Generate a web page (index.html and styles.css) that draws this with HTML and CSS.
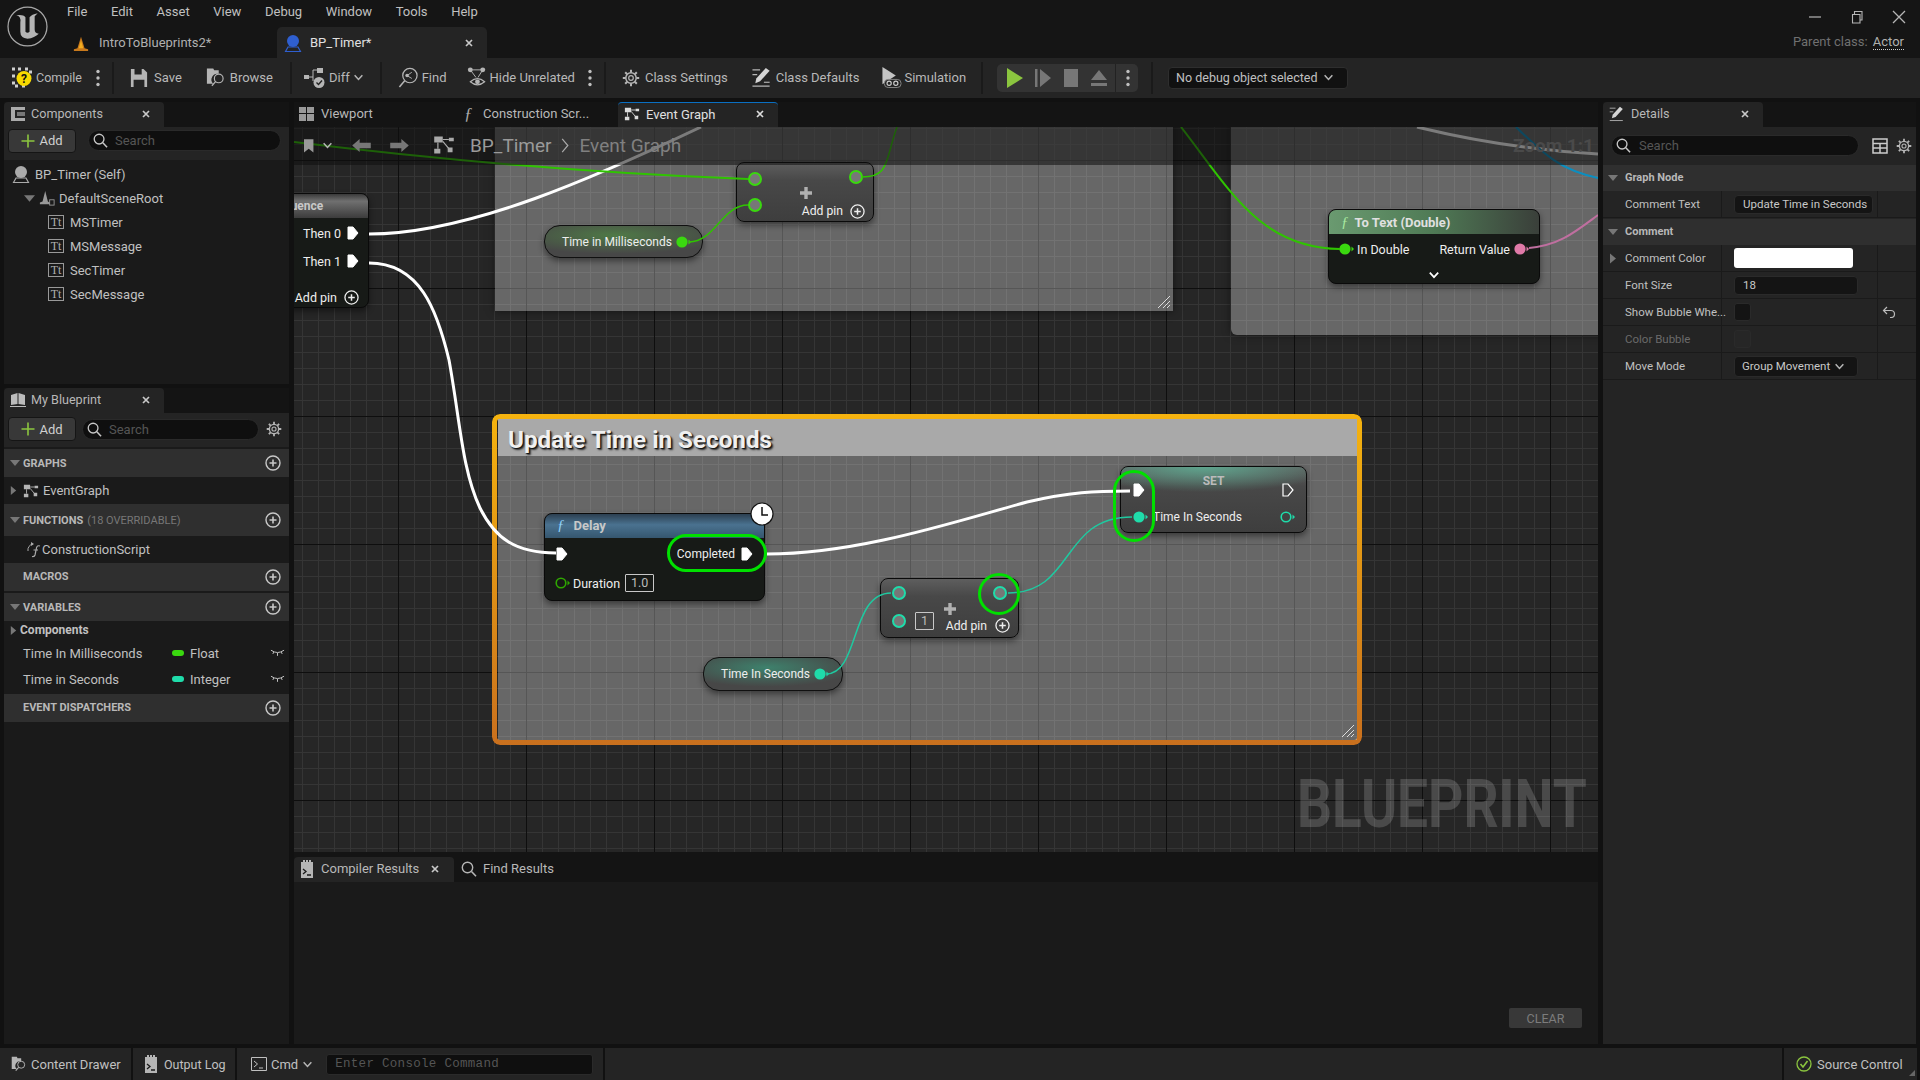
FILE: index.html
```html
<!DOCTYPE html>
<html lang="en">
<head>
    <meta charset="UTF-8">
    <title>BP_Timer</title>
    <link rel="stylesheet" href="styles.css">
</head>
<body>
    <svg class="defs" width="0" height="0">
        <symbol id="search" viewBox="0 0 16 16"><circle cx="6.5" cy="6.5" r="5.2" fill="none" stroke="currentColor" stroke-width="1.4"/><path d="M10.5 10.5L15 15.2" stroke="currentColor" stroke-width="1.6"/></symbol>
        <symbol id="close" viewBox="0 0 10 10"><path d="M2 2L8 8M8 2L2 8" stroke="currentColor" stroke-width="1.7"/></symbol>
        <symbol id="chev" viewBox="0 0 10 10"><path d="M1.5 3L5 6.8L8.5 3" fill="none" stroke="currentColor" stroke-width="1.4"/></symbol>
        <symbol id="plus" viewBox="0 0 14 14"><path d="M7 0.5V13.5M0.5 7H13.5" stroke="#8cc63f" stroke-width="1.6"/></symbol>
        <symbol id="addc" viewBox="0 0 16 16"><circle cx="8" cy="8" r="7" fill="none" stroke="currentColor" stroke-width="1.4"/><path d="M8 4.5V11.5M4.5 8H11.5" stroke="currentColor" stroke-width="1.6"/></symbol>
        <symbol id="dots" viewBox="0 0 4 18"><circle cx="2" cy="2.5" r="1.7" fill="currentColor"/><circle cx="2" cy="9" r="1.7" fill="currentColor"/><circle cx="2" cy="15.5" r="1.7" fill="currentColor"/></symbol>
        <symbol id="gear" viewBox="0 0 18 18"><circle cx="9" cy="9" r="5.2" fill="none" stroke="currentColor" stroke-width="1.5"/><circle cx="9" cy="9" r="2.3" fill="none" stroke="currentColor" stroke-width="1.2"/><path d="M9 .8V3.6M9 14.4V17.2M.8 9H3.6M14.4 9H17.2M3.2 3.2L5.2 5.2M12.8 12.8L14.8 14.8M14.8 3.2L12.8 5.2M5.2 12.8L3.2 14.8" stroke="currentColor" stroke-width="2"/></symbol>
        <symbol id="graph" viewBox="0 0 18 16"><path d="M1 1H8V6H1ZM13 2H17V5H13ZM1 11H6V15H1ZM12 10H16V14H12Z" fill="currentColor"/><path d="M8 3.5H13M4 6V11M8 5L13 11" stroke="currentColor" stroke-width="1"/></symbol>
        <symbol id="actor" viewBox="0 0 18 18"><circle cx="9" cy="7" r="6"/><path d="M4 13H14L16.5 17.5H1.5Z" fill="none" stroke="currentColor" stroke-width="1.2"/></symbol>
        <symbol id="tri" viewBox="0 0 10 10"><path d="M0 2H10L5 8Z" fill="currentColor"/></symbol>
        <symbol id="trir" viewBox="0 0 10 10"><path d="M2 0V10L8 5Z" fill="currentColor"/></symbol>
        <symbol id="exec" viewBox="0 0 12 14"><path d="M1 1H6L11 7L6 13H1Z" fill="currentColor" stroke="currentColor"/></symbol>
        <symbol id="execo" viewBox="0 0 12 14"><path d="M1 1H6L11 7L6 13H1Z" fill="none" stroke="currentColor" stroke-width="1.2"/></symbol>
        <symbol id="dataf" viewBox="0 0 15 12"><circle cx="6" cy="6" r="5.6" fill="currentColor"/><path d="M12.5 3.5L15 6L12.5 8.5Z" fill="currentColor"/></symbol>
        <symbol id="datao" viewBox="0 0 15 12"><circle cx="6" cy="6" r="4.8" fill="none" stroke="currentColor" stroke-width="1.6"/><path d="M12.5 3.5L15 6L12.5 8.5Z" fill="currentColor"/></symbol>
        <symbol id="sheet" viewBox="0 0 14 18"><path d="M1 2H3V0H5V2H6V0H8V2H9V0H11V2H13V18H1Z" fill="currentColor"/><path d="M3 9L6 11.5L3 14M7 15H11" fill="none" stroke="#1a1a1a" stroke-width="1.3"/></symbol>
        <symbol id="folder" viewBox="0 0 22 22"><path d="M1 1H8L9 3H14V7A6.5 6.5 0 0 0 8 18H1Z" fill="currentColor"/><circle cx="14" cy="12" r="4.8" fill="none" stroke="currentColor" stroke-width="1.3"/><path d="M10.5 15.5L6.5 20" stroke="currentColor" stroke-width="1.5"/></symbol>
        <symbol id="bigplus" viewBox="0 0 14 14"><path d="M7 1V13M1 7H13" stroke="currentColor" stroke-width="3.4"/></symbol>
    </svg>

    <header class="titlebar">
        <svg class="logo" viewBox="0 0 40 40"><circle cx="20" cy="20" r="19" fill="#151515" stroke="#a8a8a8" stroke-width="1.2"/><path d="M9 9Q14 10 13 16V25Q13 31 20 32Q27 31 31 27Q27 27 27 23V10L30 7Q24 8 22 11V25Q20 27 18 25V11Q16 8 9 9Z" fill="#b4b4b4"/></svg>
        <div class="title-main">
            <nav class="menu">
                <span>File</span><span>Edit</span><span>Asset</span><span>View</span><span>Debug</span><span>Window</span><span>Tools</span><span>Help</span>
            </nav>
            <div class="doc-tabs">
                <div class="doc-tab">
                    <svg class="ic16" viewBox="0 0 18 18"><path d="M1 16L5 15L9 2L13 15L17 16V18H1Z" fill="#c8791c"/><path d="M9 6L11.5 15H6.5Z" fill="#f2ae20"/></svg>
                    <span>IntroToBlueprints2*</span>
                </div>
                <div class="doc-tab doc-tab-active">
                    <svg class="ic18 actor-blue"><use href="#actor"/></svg>
                    <span>BP_Timer*</span>
                    <svg class="tab-x"><use href="#close"/></svg>
                </div>
            </div>
        </div>
        <div class="title-right">
            <div class="winctl">
                <svg viewBox="0 0 14 14"><path d="M1 7H13" stroke="currentColor" stroke-width="1.2"/></svg>
                <svg viewBox="0 0 14 14"><path d="M2.5 4.5H10V13H2.5ZM4.5 4.5V1.5H12V10H10" fill="none" stroke="currentColor" stroke-width="1.1"/></svg>
                <svg viewBox="0 0 14 14"><path d="M1 1L13 13M13 1L1 13" stroke="currentColor" stroke-width="1.3"/></svg>
            </div>
            <div class="parent-class">Parent class: <span>Actor</span></div>
        </div>
    </header>

    <div class="toolbar">
        <div class="tool t-compile">
            <svg class="ic20" viewBox="0 0 20 20"><path d="M0 0H3V3H0ZM6 0H9V3H6ZM13 0H16V3H13ZM0 7H3V10H0ZM0 14H3V17H0ZM3 17H6V20H3ZM10 17H13V20H10ZM17 3H20V6H17Z" fill="#cfcfcf"/><circle cx="12" cy="11" r="7.5" fill="#f7d900"/><text x="12" y="15.5" text-anchor="middle" class="compile-q">?</text></svg>
            <span>Compile</span>
        </div>
        <svg class="dots t-dots1"><use href="#dots"/></svg>
        <i class="sep t-sep1"></i>
        <div class="tool t-save">
            <svg class="ic18" viewBox="0 0 18 20"><path d="M0 0H14L18 4V20H0ZM4 0V6H12V0ZM3 12V20H15V12Z" fill="#b5b5b5" fill-rule="evenodd"/></svg>
            <span>Save</span>
        </div>
        <div class="tool t-browse">
            <svg class="ic20"><use href="#folder"/></svg>
            <span>Browse</span>
        </div>
        <i class="sep t-sep2"></i>
        <div class="tool t-diff">
            <svg class="ic22" viewBox="0 0 22 22"><path d="M0 8H5V12H0ZM13 1H19V6H13Z" fill="#b5b5b5"/><path d="M5 10H9V3H13M9 10V14" fill="none" stroke="#b5b5b5"/><circle cx="15" cy="15.5" r="5.5" fill="#b5b5b5"/><path d="M12.5 15.5L14.5 17.5L18 13.5" fill="none" stroke="#222" stroke-width="1.4"/></svg>
            <span>Diff</span>
            <svg class="chev"><use href="#chev"/></svg>
        </div>
        <i class="sep t-sep3"></i>
        <div class="tool t-find">
            <svg class="ic20" viewBox="0 0 20 22"><circle cx="12" cy="9" r="7.5" fill="none" stroke="#b5b5b5" stroke-width="1.3"/><path d="M6.5 14.5L1 21" stroke="#b5b5b5" stroke-width="1.6"/><path d="M9 9L14 5.5M9 9L14 12" stroke="#b5b5b5"/><circle cx="9" cy="9" r="1.8" fill="#b5b5b5"/></svg>
            <span>Find</span>
        </div>
        <div class="tool t-hide">
            <svg class="ic20" viewBox="0 0 20 22"><circle cx="3" cy="3" r="2.6" fill="#b5b5b5"/><circle cx="16" cy="3" r="2.6" fill="#b5b5b5"/><path d="M3 3L9 11M16 3L11 11M5 3H14" stroke="#b5b5b5"/><path d="M3 15.5Q10.5 9 18 15.5Q10.5 22 3 15.5Z" fill="none" stroke="#b5b5b5" stroke-width="1.2"/><circle cx="10.5" cy="15.5" r="2.5" fill="#b5b5b5"/></svg>
            <span>Hide Unrelated</span>
        </div>
        <svg class="dots t-dots2"><use href="#dots"/></svg>
        <i class="sep t-sep4"></i>
        <div class="tool t-settings">
            <svg class="ic18"><use href="#gear"/></svg>
            <span>Class Settings</span>
        </div>
        <div class="tool t-defaults">
            <svg class="ic20" viewBox="0 0 20 22"><path d="M0 3H8M0 8H5M0 20H18" stroke="#b5b5b5" stroke-width="1.2"/><path d="M14 1L18 4L8 15L3 17L4 12Z" fill="#d5d5d5"/><path d="M12 16H18" stroke="#b5b5b5" stroke-width="1.2"/></svg>
            <span>Class Defaults</span>
        </div>
        <div class="tool t-sim">
            <svg class="ic20" viewBox="0 0 20 22"><path d="M0 0L14 9L0 18Z" fill="#c4c4c4"/><rect x="2" y="13" width="17.5" height="8.5" rx="4" fill="#222" stroke="#888"/><circle cx="7" cy="17" r="2.2" fill="none" stroke="#ccc" stroke-width="1.2"/><circle cx="14" cy="17" r="2.2" fill="none" stroke="#ccc" stroke-width="1.2"/></svg>
            <span>Simulation</span>
        </div>
        <i class="sep t-sep5"></i>
        <div class="play-group">
            <svg viewBox="0 0 16 20" class="pg-play"><path d="M0 0L16 10L0 20Z" fill="#8bc53f"/></svg>
            <svg viewBox="0 0 16 20" class="pg-step"><path d="M0 1H2.5V19H0ZM5 1L16 10L5 19Z" fill="#777"/></svg>
            <svg viewBox="0 0 16 20" class="pg-stop"><path d="M1 1H15V19H1Z" fill="#777"/></svg>
            <svg viewBox="0 0 16 20" class="pg-eject"><path d="M8 2L16 12H0ZM0 15H16V18H0Z" fill="#777"/></svg>
            <i class="pg-line"></i>
            <svg class="dots pg-dots"><use href="#dots"/></svg>
        </div>
        <i class="sep t-sep6"></i>
        <div class="debug-combo">No debug object selected<svg class="chev"><use href="#chev"/></svg></div>
    </div>

    <main class="workspace">
        <aside class="left-col">
            <section class="panel panel-components">
                <div class="tabwell">
                    <div class="dock-tab dock-tab-panel">
                        <svg class="ic16" viewBox="0 0 16 16"><path d="M1 1H15V4H5V12H15V15H1Z" fill="#aaa"/><path d="M7 6H15V10H7Z" fill="#777"/></svg>
                        <span>Components</span>
                        <svg class="tab-x"><use href="#close"/></svg>
                    </div>
                </div>
                <div class="panel-bar">
                    <button class="add-btn"><svg><use href="#plus"/></svg>Add</button>
                    <div class="search search-comp"><svg><use href="#search"/></svg><span>Search</span></div>
                </div>
                <ul class="tree">
                    <li class="lvl0"><svg class="ic18 actor-grey"><use href="#actor"/></svg>BP_Timer (Self)</li>
                    <li class="lvl1">
                        <svg class="tree-arrow"><use href="#tri"/></svg>
                        <svg class="ic16" viewBox="0 0 18 18"><path d="M1 14L4 13L7 1L10 13L12 14V16H1Z" fill="#999"/><rect x="12" y="11" width="5" height="6" fill="none" stroke="#999"/></svg>
                        DefaultSceneRoot
                    </li>
                    <li class="lvl2"><span class="tt">Tt</span>MSTimer</li>
                    <li class="lvl2"><span class="tt">Tt</span>MSMessage</li>
                    <li class="lvl2"><span class="tt">Tt</span>SecTimer</li>
                    <li class="lvl2"><span class="tt">Tt</span>SecMessage</li>
                </ul>
            </section>

            <section class="panel panel-blueprint">
                <div class="tabwell">
                    <div class="dock-tab dock-tab-panel">
                        <svg class="ic16" viewBox="0 0 16 14"><path d="M1 2L7.5 0V11L1 12ZM8.5 0L15 2V12L8.5 11ZM0 13H16V14H0Z" fill="#bbb"/></svg>
                        <span>My Blueprint</span>
                        <svg class="tab-x"><use href="#close"/></svg>
                    </div>
                </div>
                <div class="panel-bar panel-bar-bp">
                    <button class="add-btn"><svg><use href="#plus"/></svg>Add</button>
                    <div class="search search-bp"><svg><use href="#search"/></svg><span>Search</span></div>
                    <svg class="ic16 bp-gear"><use href="#gear"/></svg>
                </div>
                <div class="sec sec-graphs"><svg class="sec-arrow"><use href="#tri"/></svg><b>GRAPHS</b><svg class="sec-add"><use href="#addc"/></svg></div>
                <div class="bp-row bp-row-graph"><svg class="row-arrow"><use href="#trir"/></svg><svg class="ic16 row-ic"><use href="#graph"/></svg>EventGraph</div>
                <div class="sec sec-func"><svg class="sec-arrow"><use href="#tri"/></svg><b>FUNCTIONS</b><em>(18 OVERRIDABLE)</em><svg class="sec-add"><use href="#addc"/></svg></div>
                <div class="bp-row bp-row-script">
                    <svg class="ic16" viewBox="0 0 16 16"><path d="M7 2A6 6 0 0 0 2 9" fill="none" stroke="#aaa"/><path d="M5 0L8 2L5 4Z" fill="#aaa"/><path d="M14 4Q11 3 10.5 6L9 13Q8.5 15 6 14.5M7.5 8H12" fill="none" stroke="#aaa" stroke-width="1.2"/></svg>
                    ConstructionScript
                </div>
                <div class="sec sec-nohead sec-macros"><b>MACROS</b><svg class="sec-add"><use href="#addc"/></svg></div>
                <div class="sec sec-vars"><svg class="sec-arrow"><use href="#tri"/></svg><b>VARIABLES</b><svg class="sec-add"><use href="#addc"/></svg></div>
                <div class="bp-cat"><svg class="row-arrow"><use href="#trir"/></svg><b>Components</b></div>
                <div class="var-row var-ms">
                    <span class="var-name">Time In Milliseconds</span><i class="var-type type-float"></i><span>Float</span>
                    <svg class="eye" viewBox="0 0 16 8"><path d="M1 1Q8 6 15 1M4 3L3 5M8 4V7M12 3L13 5" fill="none" stroke="#ccc"/></svg>
                </div>
                <div class="var-row var-sec">
                    <span class="var-name">Time in Seconds</span><i class="var-type type-int"></i><span>Integer</span>
                    <svg class="eye" viewBox="0 0 16 8"><path d="M1 1Q8 6 15 1M4 3L3 5M8 4V7M12 3L13 5" fill="none" stroke="#ccc"/></svg>
                </div>
                <div class="sec sec-nohead sec-disp"><b>EVENT DISPATCHERS</b><svg class="sec-add"><use href="#addc"/></svg></div>
            </section>
        </aside>

        <div class="center-col">
            <div class="tabwell tabwell-center">
                <div class="dock-tab dt-viewport">
                    <svg class="ic14" viewBox="0 0 15 14"><path d="M0 0H7V6H0ZM8 0H15V6H8ZM0 7H7V14H0ZM8 7H15V14H8Z" fill="#999"/></svg>
                    <span>Viewport</span>
                </div>
                <div class="dock-tab dt-script">
                    <span class="fn-tab">ƒ</span>
                    <span>Construction Scr...</span>
                </div>
                <div class="dock-tab dt-event">
                    <svg class="ic16"><use href="#graph"/></svg>
                    <span>Event Graph</span>
                    <svg class="tab-x"><use href="#close"/></svg>
                </div>
            </div>

            <div class="graph">
                <div class="comment comment-a"><svg class="hatch" viewBox="0 0 14 14"><path d="M1 13L13 1M6 13L13 6M10 13L13 10" stroke="#ddd"/></svg></div>
                <div class="comment comment-b"></div>

                <div class="comment-sel">
                    <div class="comment-sel-body">
                        <div class="comment-title">Update Time in Seconds</div>
                        <svg class="hatch" viewBox="0 0 14 14"><path d="M1 13L13 1M6 13L13 6M10 13L13 10" stroke="#ddd"/></svg>
                    </div>
                </div>

                <!-- nodes -->
                <div class="node n-seq">
                    <div class="n-head head-grey">Sequence</div>
                    <div class="seq-row seq-r0">Then 0<svg class="pin-exec"><use href="#exec"/></svg></div>
                    <div class="seq-row">Then 1<svg class="pin-exec"><use href="#exec"/></svg></div>
                    <div class="seq-row seq-add">Add pin<svg class="pin-add"><use href="#addc"/></svg></div>
                </div>

                <div class="varnode n-ms">
                    <span>Time in Milliseconds</span><svg class="pin-data c-green"><use href="#dataf"/></svg>
                </div>

                <div class="node pure n-add1">
                    <div class="pure-row"><i class="ringpin c-green"></i><i class="ringpin c-green"></i></div>
                    <svg class="pure-plus"><use href="#bigplus"/></svg>
                    <div class="pure-row pure-row2"><i class="ringpin c-green"></i><span class="pure-add">Add pin<svg class="pin-add"><use href="#addc"/></svg></span></div>
                </div>

                <div class="node n-totext">
                    <div class="n-head head-green"><i class="fn">ƒ</i>To Text (Double)</div>
                    <div class="n-row">
                        <span class="lbl"><svg class="pin-data c-green"><use href="#dataf"/></svg>In Double</span>
                        <span class="lbl">Return Value<svg class="pin-data c-pink"><use href="#dataf"/></svg></span>
                    </div>
                    <svg class="node-chev"><use href="#chev"/></svg>
                </div>

                <div class="node n-delay">
                    <div class="n-head head-blue"><i class="fn">ƒ</i>Delay</div>
                    <div class="n-row delay-r1">
                        <svg class="pin-exec"><use href="#exec"/></svg>
                        <span class="lbl">Completed<svg class="pin-exec"><use href="#exec"/></svg></span>
                    </div>
                    <div class="n-row delay-r2">
                        <span class="lbl"><svg class="pin-data c-dkgreen"><use href="#datao"/></svg>Duration<span class="numbox">1.0</span></span>
                    </div>
                </div>
                <div class="clock">
                    <svg viewBox="0 0 24 24"><circle cx="12" cy="12" r="11" fill="#fff" stroke="#111" stroke-width="1.2"/><path d="M12 5V13H18" fill="none" stroke="#111" stroke-width="1.5"/></svg>
                </div>

                <div class="node pure n-add2">
                    <div class="pure-row"><i class="ringpin c-teal"></i><i class="ringpin c-teal"></i></div>
                    <svg class="pure-plus"><use href="#bigplus"/></svg>
                    <div class="pure-row pure-row2 add2-r2"><i class="ringpin c-teal"></i><span class="numbox box-one">1</span><span class="pure-add">Add pin<svg class="pin-add"><use href="#addc"/></svg></span></div>
                </div>

                <div class="varnode n-secs">
                    <span>Time In Seconds</span><svg class="pin-data c-teal"><use href="#dataf"/></svg>
                </div>

                <div class="node pure n-set">
                    <div class="set-head">SET</div>
                    <div class="set-r1"><svg class="pin-exec"><use href="#exec"/></svg><svg class="pin-exec"><use href="#execo"/></svg></div>
                    <div class="set-r2"><svg class="pin-data c-teal"><use href="#dataf"/></svg><span>Time In Seconds</span><svg class="pin-data c-teal"><use href="#datao"/></svg></div>
                </div>

                <!-- wires, in page coordinates -->
                <svg class="wires" viewBox="294 127 1304 725">
                    <g fill="none">
                        <path d="M369 234C470 234 600 175 701 127" stroke="#fff" stroke-width="3"/>
                        <path d="M1417 127C1470 140 1530 150 1598 154" stroke="#fff" stroke-width="3"/>
                        <path d="M369 263C420 263 437 310 449 360C460 420 462 470 480 508C495 538 515 553 556 553" stroke="#fff" stroke-width="3"/>
                        <path d="M767 554C860 554 960 520 1027 502C1070 492 1095 491 1130 491" stroke="#fff" stroke-width="3"/>
                        <path d="M294 142C400 155 560 172 748 179" stroke="#2fc400" stroke-width="2"/>
                        <path d="M689 242C715 242 722 205 748 205" stroke="#2fc400" stroke-width="1.5"/>
                        <path d="M862 177C890 177 885 160 897 127" stroke="#2fc400" stroke-width="1.5"/>
                        <path d="M1181 127C1230 190 1260 248 1340 249" stroke="#2fc400" stroke-width="2"/>
                        <path d="M1516 127C1545 155 1560 170 1598 178" stroke="#0b8ec0" stroke-width="2"/>
                        <path d="M1529 248C1560 245 1575 232 1598 215" stroke="#c06fa0" stroke-width="2"/>
                        <path d="M826 674C860 674 850 593 891 593" stroke="#1fc9a0" stroke-width="1.5"/>
                        <path d="M1008 593C1075 593 1060 517 1132 517" stroke="#1fc9a0" stroke-width="1.5"/>
                    </g>
                </svg>

                <i class="ring ring-completed"></i>
                <i class="ring ring-set"></i>
                <i class="ring ring-add"></i>

                <div class="graph-bar">
                    <svg class="gb-book" viewBox="0 0 14 18"><path d="M0 1H12V18L6 13L0 18Z" fill="#999"/></svg>
                    <svg class="gb-chev"><use href="#chev"/></svg>
                    <svg class="gb-back" viewBox="0 0 20 14"><path d="M0 7L8 0V4H20V10H8V14Z" fill="#777"/></svg>
                    <svg class="gb-fwd" viewBox="0 0 20 14"><path d="M20 7L12 0V4H0V10H12V14Z" fill="#777"/></svg>
                    <svg class="gb-graph"><use href="#graph"/></svg>
                    <span class="crumb">BP_Timer</span>
                    <svg class="crumb-sep" viewBox="0 0 8 16"><path d="M1 1L7 8L1 15" fill="none" stroke="#aaa" stroke-width="1.3"/></svg>
                    <span class="crumb crumb-2">Event Graph</span>
                    <span class="zoom-label">Zoom 1:1</span>
                </div>
                <div class="watermark">BLUEPRINT</div>
            </div>

            <div class="tabwell tabwell-bottom">
                <div class="dock-tab dt-compiler">
                    <svg class="ic18"><use href="#sheet"/></svg>
                    <span>Compiler Results</span>
                    <svg class="tab-x"><use href="#close"/></svg>
                </div>
                <div class="dock-tab dt-find">
                    <svg class="ic16"><use href="#search"/></svg>
                    <span>Find Results</span>
                </div>
            </div>
            <div class="results">
                <button class="clear-btn">CLEAR</button>
            </div>
        </div>

        <aside class="details">
            <div class="tabwell">
                <div class="dock-tab dock-tab-panel dt-details">
                    <svg class="ic16" viewBox="0 0 20 22"><path d="M0 3H8M0 8H5M0 20H18" stroke="#b5b5b5" stroke-width="1.2"/><path d="M14 1L18 4L8 15L3 17L4 12Z" fill="#d5d5d5"/></svg>
                    <span>Details</span>
                    <svg class="tab-x"><use href="#close"/></svg>
                </div>
            </div>
            <div class="details-body">
                <div class="details-search">
                    <div class="search search-det"><svg><use href="#search"/></svg><span>Search</span></div>
                    <svg class="ic16 det-table" viewBox="0 0 16 16"><path d="M1 1H15V15H1ZM1 5.5H15M1 10H15M8 5.5V15" fill="none" stroke="#ccc" stroke-width="1.5"/></svg>
                    <svg class="ic16 det-gear"><use href="#gear"/></svg>
                </div>
                <div class="det-sec"><svg class="sec-arrow"><use href="#tri"/></svg>Graph Node</div>
                <div class="det-row">
                    <span class="det-name">Comment Text</span>
                    <span class="det-val"><span class="text-box">Update Time in Seconds</span></span>
                    <span class="det-reset"></span>
                </div>
                <div class="det-sec"><svg class="sec-arrow"><use href="#tri"/></svg>Comment</div>
                <div class="det-row">
                    <span class="det-name"><svg class="det-arrow"><use href="#trir"/></svg>Comment Color</span>
                    <span class="det-val"><i class="swatch"></i></span>
                    <span class="det-reset"></span>
                </div>
                <div class="det-row">
                    <span class="det-name">Font Size</span>
                    <span class="det-val"><span class="text-box box-font">18</span></span>
                    <span class="det-reset"></span>
                </div>
                <div class="det-row">
                    <span class="det-name">Show Bubble Whe...</span>
                    <span class="det-val"><i class="check"></i></span>
                    <span class="det-reset"><svg viewBox="0 0 14 12"><path d="M5 1L1.5 4.5L5 8M1.5 4.5H9A3.5 3.5 0 0 1 9 11.5H8" fill="none" stroke="#bbb" stroke-width="1.2"/></svg></span>
                </div>
                <div class="det-row row-dim">
                    <span class="det-name">Color Bubble</span>
                    <span class="det-val"><i class="check check-dim"></i></span>
                    <span class="det-reset"></span>
                </div>
                <div class="det-row">
                    <span class="det-name">Move Mode</span>
                    <span class="det-val"><span class="text-box box-combo">Group Movement<svg class="chev"><use href="#chev"/></svg></span></span>
                    <span class="det-reset"></span>
                </div>
            </div>
        </aside>
    </main>

    <footer class="statusbar">
        <div class="st-btn st-drawer"><svg class="ic16"><use href="#folder"/></svg>Content Drawer</div>
        <div class="st-btn st-log"><svg class="ic18"><use href="#sheet"/></svg>Output Log</div>
        <div class="st-btn st-cmd">
            <svg class="ic16" viewBox="0 0 16 14"><path d="M.5.5H15.5V13.5H.5ZM3 4L6.5 7L3 10M8 11H12" fill="none" stroke="#c0c0c0"/></svg>
            Cmd<svg class="chev"><use href="#chev"/></svg>
            <div class="console">Enter Console Command</div>
        </div>
        <div class="st-fill"></div>
        <div class="st-btn st-source">
            <svg class="ic16" viewBox="0 0 16 16"><circle cx="8" cy="8" r="7" fill="none" stroke="#8bc53f" stroke-width="1.3"/><path d="M4.5 8L7 11L11.5 5" fill="none" stroke="#8bc53f" stroke-width="1.6"/></svg>
            Source Control
            <svg class="grip" viewBox="0 0 6 6"><path d="M6 0V6H0Z" fill="#666"/></svg>
        </div>
    </footer>
</body>
</html>
```

FILE: styles.css
```css
* {
    box-sizing: border-box;
}
html, body {
    margin: 0;
    height: 100%;
}
body {
    width: 1920px;
    height: 1080px;
    overflow: hidden;
    display: flex;
    flex-direction: column;
    background: #111;
    color: #c0c0c0;
    font-family: Roboto, "Liberation Sans", sans-serif;
    font-size: 13px;
}
svg {
    display: block;
    flex: none;
    color: #b5b5b5;
}
button {
    font-family: inherit;
}
ul {
    list-style: none;
    margin: 0;
    padding: 0;
}
.defs {
    position: absolute;
}
.ic14 { width: 15px; height: 14px; }
.ic16 { width: 16px; height: 16px; }
.ic18 { width: 18px; height: 18px; }
.ic20 { width: 20px; height: 21px; }
.ic22 { width: 22px; height: 22px; }
.chev { width: 11px; height: 11px; }

/* title bar */
.titlebar {
    height: 58px;
    display: flex;
    background: #151515;
}
.logo {
    width: 41px;
    height: 41px;
    margin: 6px 0 0 7px;
}
.compile-q {
    font: bold 12px Roboto, sans-serif;
    fill: #111;
}
.title-main {
    flex: 1;
}
.menu {
    height: 27px;
    display: flex;
    align-items: center;
    gap: 23.6px;
    padding: 0 0 4px 19px;
}
.doc-tabs {
    display: flex;
    height: 31px;
}
.doc-tab {
    display: flex;
    align-items: center;
    gap: 10px;
    width: 229px;
    padding-left: 25px;
    color: #b0b0b0;
}
.doc-tab-active {
    width: 210px;
    padding: 0 13px 0 7px;
    gap: 8px;
    border-radius: 5px 5px 0 0;
    background: #242424;
    color: #e0e0e0;
}
.actor-blue {
    color: #2f5fd0;
    fill: #2f5fd0;
}
.actor-grey {
    color: #aaa;
    fill: #aaa;
}
.tab-x {
    width: 10px;
    height: 10px;
    color: #c8c8c8;
    margin-left: auto;
}
.title-right {
    width: 128px;
    display: flex;
    flex-direction: column;
    align-items: flex-end;
    padding-right: 16px;
}
.winctl {
    display: flex;
    gap: 28px;
    margin: 10px -2px 0 0;
    color: #c0c0c0;
}
.winctl svg {
    width: 14px;
    height: 14px;
}
.parent-class {
    margin-top: 10px;
    color: #707070;
    white-space: nowrap;
}
.parent-class span {
    color: #b0b0b0;
    margin-left: 2px;
    border-bottom: 1px dotted #ccc;
}

/* toolbar */
.toolbar {
    height: 40px;
    display: flex;
    align-items: center;
    padding: 0 0 1px 12px;
    background: #242424;
}
.tool {
    display: flex;
    align-items: center;
    gap: 4px;
    white-space: nowrap;
    color: #b8b8b8;
}
.t-compile span {
    font-size: 12.5px;
}
.dots {
    width: 4px;
    height: 18px;
    color: #c0c0c0;
}
.sep {
    width: 2px;
    height: 32px;
    background: #1a1a1a;
}
.t-dots1 { margin-left: 14px; }
.t-sep1 { margin-left: 12px; }
.t-save { margin-left: 16px; gap: 6px; }
.t-browse { margin-left: 24px; }
.t-sep2 { margin-left: 17px; }
.t-diff { margin-left: 12px; gap: 3px; }
.t-diff .chev { margin-left: 0; }
.t-sep3 { margin-left: 16px; }
.t-find { margin-left: 16px; }
.t-hide { margin-left: 20px; gap: 3px; }
.t-dots2 { margin-left: 13px; }
.t-sep4 { margin-left: 12px; }
.t-settings { margin-left: 16px; gap: 5px; }
.t-defaults { margin-left: 24px; }
.t-sim { margin-left: 23px; gap: 2px; }
.t-sep5 { margin-left: 15px; }
.play-group {
    width: 141px;
    height: 28px;
    margin-left: 14px;
    display: flex;
    align-items: center;
    border-radius: 5px;
    background: #333;
}
.play-group svg {
    width: 16px;
    height: 20px;
}
.pg-play { margin-left: 10px; }
.pg-step { margin-left: 12px; }
.pg-stop { margin-left: 12px; }
.pg-eject { margin-left: 12px; }
.pg-line {
    width: 1px;
    height: 28px;
    background: #222;
    margin-left: 8px;
}
.play-group .pg-dots {
    width: 4px;
    height: 18px;
    margin-left: 10px;
}
.t-sep6 { margin-left: 13px; }
.debug-combo {
    width: 180px;
    height: 22px;
    margin-left: 15px;
    display: flex;
    align-items: center;
    gap: 5px;
    padding-left: 7px;
    border-radius: 4px;
    border: 1px solid #2e2e2e;
    background: #111;
    font-size: 12.5px;
    white-space: nowrap;
}

/* workspace */
.workspace {
    height: 950px;
    display: flex;
    padding: 4px;
    gap: 5px;
}
.left-col {
    width: 285px;
    display: flex;
    flex-direction: column;
    gap: 4px;
}
.panel {
    display: flex;
    flex-direction: column;
    background: #1a1a1a;
}
.panel-components {
    height: 282px;
}
.panel-blueprint {
    flex: 1;
}
.tabwell {
    height: 25px;
    flex: none;
    display: flex;
    background: #141414;
}
.dock-tab {
    display: flex;
    align-items: center;
    gap: 7px;
    height: 25px;
    padding-bottom: 2px;
    color: #b8b8b8;
    white-space: nowrap;
}
.dock-tab-panel {
    width: 160px;
    padding: 0 13px 2px 6px;
    gap: 5px;
    font-size: 12.6px;
    background: #242424;
    border-radius: 4px 4px 0 0;
}
.panel-bar {
    height: 33px;
    flex: none;
    display: flex;
    align-items: center;
    padding: 0 0 6px 4px;
    background: #242424;
}
.add-btn {
    width: 68px;
    height: 24px;
    display: flex;
    align-items: center;
    justify-content: center;
    gap: 4px;
    padding: 0;
    border: 1px solid #151515;
    border-radius: 4px;
    background: #383838;
    color: #d0d0d0;
    font-size: 13px;
}
.add-btn svg {
    width: 14px;
    height: 14px;
}
.search {
    height: 21px;
    display: flex;
    align-items: center;
    gap: 7px;
    padding-left: 4px;
    border-radius: 11px;
    border: 1px solid #2a2a2a;
    background: #0f0f0f;
    color: #555;
}
.search svg {
    width: 15px;
    height: 15px;
    color: #c8c8c8;
}
.search-comp {
    width: 193px;
    margin-left: 12px;
}
.search-bp {
    width: 177px;
    margin-left: 6px;
}
.bp-gear {
    margin-left: 7px;
}
.panel-bar-bp {
    height: 34px;
    padding-bottom: 2px;
    margin-bottom: 2px;
}
.tree {
    flex: 1;
    padding-top: 2px;
}
.tree li {
    height: 24px;
    display: flex;
    align-items: center;
    white-space: nowrap;
}
.lvl0 {
    padding-left: 8px;
    gap: 5px;
}
.lvl1 {
    padding-left: 20px;
    gap: 4px;
}
.tree-arrow {
    width: 11px;
    height: 11px;
    color: #777;
}
.lvl2 {
    padding-left: 44px;
    gap: 6px;
}
.tt {
    width: 16px;
    height: 14px;
    display: flex;
    align-items: center;
    justify-content: center;
    border: 1px solid #999;
    font: 12px/1 "Liberation Serif", serif;
    color: #b0b0b0;
}

/* my blueprint */
.sec {
    display: flex;
    align-items: center;
    flex: none;
    padding: 0 6px;
    background: #2f2f2f;
    font-size: 11px;
    color: #b8b8b8;
    white-space: nowrap;
}
.sec-graphs, .sec-macros, .sec-vars, .sec-disp {
    height: 28px;
}
.sec-func {
    height: 32px;
}
.sec-macros {
    margin-bottom: 2px;
}
.sec-nohead {
    padding-left: 19px;
    padding-bottom: 1px;
}
.sec-arrow {
    width: 10px;
    height: 10px;
    margin-right: 3px;
    color: #777;
}
.sec em {
    margin-left: 4px;
    font-style: normal;
    color: #777;
}
.sec-add {
    width: 16px;
    height: 16px;
    margin-left: auto;
    margin-right: 2px;
    color: #c8c8c8;
}
.bp-row {
    height: 27px;
    flex: none;
    display: flex;
    align-items: center;
    white-space: nowrap;
}
.bp-row-graph {
    padding-left: 5px;
    gap: 4px;
}
.row-arrow {
    width: 9px;
    height: 11px;
    color: #777;
}
.row-ic {
    margin-left: 1px;
}
.bp-row-script {
    padding-left: 22px;
    gap: 0;
}
.bp-cat {
    height: 18px;
    display: flex;
    align-items: center;
    gap: 2px;
    padding-left: 5px;
    font-size: 12px;
}
.var-row {
    height: 26px;
    flex: none;
    display: flex;
    align-items: center;
    padding-left: 19px;
    white-space: nowrap;
}
.var-ms {
    margin-top: 1px;
}
.var-sec {
    margin-bottom: 2px;
}
.var-name {
    width: 149px;
}
.var-type {
    width: 12px;
    height: 6px;
    border-radius: 3px;
    margin-right: 6px;
}
.type-float { background: #3ad80f; }
.type-int { background: #1fdcaa; }
.eye {
    width: 15px;
    height: 8px;
    margin-left: auto;
    margin-right: 4px;
}

/* center */
.center-col {
    width: 1304px;
    display: flex;
    flex-direction: column;
}
.dt-viewport {
    width: 170px;
    padding-left: 5px;
}
.fn-tab {
    font: italic 17px/1 "Liberation Serif", serif;
    color: #aaa;
    width: 12px;
}
.dt-script {
    width: 154px;
}
.dt-event {
    width: 160px;
    padding: 0 13px 2px 6px;
    gap: 6px;
    background: #242424;
    border-radius: 4px 4px 0 0;
    border-top: 1px solid #0a6fc2;
    color: #e0e0e0;
}
.dt-event svg {
    color: #ddd;
}
.graph {
    position: relative;
    height: 725px;
    overflow: hidden;
    background-color: #262626;
    background-image:
        linear-gradient(to right, #0e0e0e 1px, transparent 1px),
        linear-gradient(to bottom, #0e0e0e 1px, transparent 1px),
        linear-gradient(to right, #353535 1px, transparent 1px),
        linear-gradient(to bottom, #353535 1px, transparent 1px);
    background-size: 128px 128px, 128px 128px, 16px 16px, 16px 16px;
    background-position: 104px 33px, 104px 33px, 8px 1px, 8px 1px;
}
.comment {
    position: absolute;
    background: rgba(255, 255, 255, 0.3);
    box-shadow: 0 0 8px rgba(0, 0, 0, 0.5);
}
.comment-a {
    left: 201px;
    top: -40px;
    width: 678px;
    height: 224px;
}
.comment-b {
    left: 937px;
    top: -40px;
    width: 420px;
    height: 248px;
    border-radius: 0 0 0 6px;
}
.hatch {
    position: absolute;
    right: 2px;
    bottom: 2px;
    width: 14px;
    height: 14px;
}
.comment-sel {
    position: absolute;
    left: 198px;
    top: 287px;
    width: 870px;
    height: 331px;
    padding: 5px 5px 5px 6px;
}
.comment-sel::before {
    content: "";
    position: absolute;
    inset: 0;
    padding: 5px;
    border-radius: 8px;
    background: linear-gradient(#f5b30f, #c9701e);
    -webkit-mask: linear-gradient(#000 0 0) content-box, linear-gradient(#000 0 0);
    -webkit-mask-composite: xor;
    mask-composite: exclude;
}
.comment-sel-body {
    position: relative;
    height: 100%;
    background: rgba(255, 255, 255, 0.3);
}
.comment-title {
    height: 37px;
    padding-left: 10px;
    background: #a9a9a9;
    color: #f0f0f0;
    font-size: 24.2px;
    font-weight: 700;
    line-height: 43px;
    white-space: nowrap;
    text-shadow: 1px 1px 1px #111, 2px 2px 2px #333;
}

/* nodes */
.node {
    position: absolute;
    border-radius: 8px;
    border: 1px solid #0a0a0a;
    background: #171a17;
    box-shadow: 0 3px 6px rgba(0, 0, 0, 0.45);
    color: #eee;
    font-size: 12.5px;
    white-space: nowrap;
}
.n-head {
    height: 24px;
    display: flex;
    align-items: center;
    border-radius: 7px 7px 0 0;
    font-weight: 700;
    font-size: 12px;
    color: #c8c8c8;
}
.fn {
    font: italic 15px/1 "Liberation Serif", serif;
    margin-right: 6px;
}
.head-grey {
    background: linear-gradient(#3a3a3a, #707070 30%, #3c3c3c);
    padding-left: 39px;
}
.head-green {
    background: linear-gradient(to right, #6a9a70, #4f7a55 50%, #3a3f3a);
    padding-left: 12px;
    font-size: 13px;
    color: #e0e0e0;
}
.head-green .fn { color: #a8e8a0; }
.head-blue {
    background: linear-gradient(#2c3f50, #4a7290 45%, #35566f), linear-gradient(#000, #000);
    padding: 0 0 2px 12px;
    font-size: 13px;
}
.head-blue .fn {
    color: #8fd0f8;
    margin-right: 9px;
}
.n-row {
    display: flex;
    align-items: center;
    justify-content: space-between;
}
.lbl {
    display: flex;
    align-items: center;
    gap: 3px;
}
.pin-exec {
    width: 12px;
    height: 14px;
    color: #fff;
}
.pin-add {
    width: 15px;
    height: 15px;
    color: #eee;
}
.pin-data {
    width: 15px;
    height: 12px;
}
.c-green { color: #3ad80f; }
.c-teal { color: #1fdcaa; }
.c-pink { color: #e07aa8; }
.c-dkgreen { color: #2fa800; }

.n-seq {
    left: -64px;
    top: 66px;
    width: 139px;
    height: 115px;
}
.seq-row {
    height: 28px;
    display: flex;
    align-items: center;
    justify-content: flex-end;
    gap: 6px;
    padding-right: 9px;
}
.seq-r0 {
    margin-top: 1px;
}
.seq-add {
    margin-top: 8px;
    gap: 7px;
}

.varnode {
    position: absolute;
    display: flex;
    align-items: center;
    justify-content: space-between;
    padding: 0 11px 0 17px;
    border-radius: 16px;
    border: 1px solid #101010;
    box-shadow: 0 3px 6px rgba(0, 0, 0, 0.45);
    color: #eee;
    font-size: 12px;
    white-space: nowrap;
}
.n-ms {
    left: 250px;
    top: 98px;
    width: 159px;
    height: 33px;
    background: radial-gradient(ellipse 70% 60% at 45% 30%, rgba(80, 130, 70, 0.85), transparent), #474747;
}
.n-secs {
    left: 409px;
    top: 530px;
    width: 140px;
    height: 34px;
    padding: 0 13px 0 17px;
    background: radial-gradient(ellipse 65% 60% at 45% 30%, rgba(60, 140, 115, 0.85), transparent), #474747;
}

.pure {
    background: linear-gradient(#5e5e5e, #484848 30%, #3e3e3e);
}
.pure-row {
    display: flex;
    align-items: center;
    justify-content: space-between;
    height: 28px;
    padding: 0 11px;
}
.pure-row2 {
    justify-content: flex-start;
    padding-right: 8px;
}
.ringpin {
    width: 14px;
    height: 14px;
    flex: none;
    border-radius: 50%;
    border: 2px solid currentColor;
    background: #777;
}
.pure-plus {
    position: absolute;
    left: 62px;
    top: 23px;
    width: 14px;
    height: 14px;
    color: #b0b0b0;
}
.pure-add {
    display: flex;
    align-items: center;
    gap: 7px;
    margin-left: auto;
    font-size: 12.2px;
}
.n-add1 {
    left: 442px;
    top: 35px;
    width: 138px;
    height: 60px;
}
.n-add1 .pure-row:first-child {
    margin-top: 2px;
}
.n-add1 .pure-row:first-child .ringpin:last-child {
    margin: -4px -1px 0 0;
}
.n-add1 .pure-row2 {
    margin-top: -2px;
}
.n-add1 .pure-add {
    margin-top: 12px;
}
.n-add2 {
    left: 586px;
    top: 451px;
    width: 139px;
    height: 60px;
}
.add2-r2 .pure-add {
    margin-top: 9px;
    gap: 8px;
}
.box-one {
    margin-left: 9px;
}
.numbox {
    display: inline-block;
    height: 18px;
    padding: 0 5px;
    border: 1px solid #c8c8c8;
    border-radius: 1px;
    line-height: 16px;
    font-size: 12.5px;
    color: #bbb;
}
.n-totext {
    left: 1034px;
    top: 82px;
    width: 212px;
    height: 75px;
}
.n-totext .n-row {
    height: 30px;
    padding: 0 10px;
}
.n-totext .lbl:last-child {
    gap: 4px;
}
.node-chev {
    margin: 5px auto 0;
    width: 12px;
    height: 12px;
    color: #fff;
}
.n-delay {
    left: 250px;
    top: 386px;
    width: 221px;
    height: 88px;
}
.delay-r1 {
    height: 32px;
    padding: 0 11px;
}
.delay-r1 .lbl {
    gap: 6px;
    font-size: 12px;
}
.delay-r2 {
    height: 26px;
    padding-left: 10px;
}
.delay-r2 .numbox {
    margin-left: 2px;
}
.clock {
    position: absolute;
    left: 456px;
    top: 375px;
}
.clock svg {
    width: 24px;
    height: 24px;
}
.n-set {
    left: 826px;
    top: 339px;
    width: 187px;
    height: 67px;
    font-size: 12px;
}
.set-head {
    position: absolute;
    left: 0;
    right: 0;
    top: 0;
    height: 25px;
    border-radius: 7px 7px 0 0;
    text-align: center;
    line-height: 28px;
    font-size: 12px;
    font-weight: 700;
    color: #bbb;
    background: radial-gradient(ellipse 70% 100% at 45% 0, #5ea48d, transparent);
}
.set-r1 {
    position: relative;
    display: flex;
    justify-content: space-between;
    padding: 16px 12px 0 12px;
}
.set-r2 {
    display: flex;
    align-items: center;
    margin-top: 13px;
    padding: 0 11px 0 12px;
}
.set-r2 span {
    margin-left: 5px;
    margin-right: auto;
}

.wires {
    position: absolute;
    left: 0;
    top: 0;
    width: 1304px;
    height: 725px;
    pointer-events: none;
}
.ring {
    position: absolute;
    border: 3px solid #00e000;
}
.ring-completed {
    left: 373px;
    top: 407px;
    width: 100px;
    height: 38px;
    border-radius: 19px;
}
.ring-set {
    left: 819px;
    top: 343px;
    width: 42px;
    height: 72px;
    border-radius: 21px;
}
.ring-add {
    left: 684px;
    top: 446px;
    width: 42px;
    height: 42px;
    border-radius: 50%;
}

.graph-bar {
    position: absolute;
    left: 0;
    right: 0;
    top: 0;
    height: 38px;
    display: flex;
    align-items: center;
    padding-bottom: 2px;
    background: rgba(14, 14, 14, 0.55);
}
.gb-book {
    width: 11px;
    height: 15px;
    margin-left: 10px;
}
.gb-chev {
    width: 11px;
    height: 11px;
    margin-left: 7px;
}
.gb-back {
    width: 19px;
    height: 13px;
    margin-left: 19px;
}
.gb-fwd {
    width: 19px;
    height: 13px;
    margin-left: 19px;
}
.gb-graph {
    width: 22px;
    height: 20px;
    margin-left: 24px;
    color: #aaa;
}
.crumb {
    margin-left: 15px;
    font-size: 19px;
    color: #9a9a9a;
}
.crumb-sep {
    width: 8px;
    height: 15px;
    margin-left: 9px;
}
.crumb-2 {
    margin-left: 11px;
    color: #808080;
}
.zoom-label {
    position: absolute;
    right: 4px;
    top: 7px;
    font-size: 19px;
    font-weight: 700;
    color: #4a4a4a;
}
.watermark {
    position: absolute;
    left: 1003px;
    top: 643px;
    font-size: 67px;
    font-weight: 700;
    line-height: 68px;
    color: rgba(255, 255, 255, 0.17);
    transform: scaleX(0.82);
    transform-origin: left top;
    white-space: nowrap;
}

/* bottom */
.tabwell-bottom {
    height: 30px;
    align-items: flex-end;
    padding-top: 5px;
}
.dt-compiler {
    width: 160px;
    padding: 0 14px 2px 4px;
    gap: 5px;
    background: #242424;
    border-radius: 4px 4px 0 0;
}
.dt-find {
    margin-left: 7px;
    gap: 6px;
}
.results {
    flex: 1;
    display: flex;
    align-items: flex-end;
    justify-content: flex-end;
    padding: 0 16px 16px 0;
    background: #1a1a1a;
}
.clear-btn {
    width: 73px;
    height: 20px;
    padding: 0;
    border: 0;
    border-radius: 2px;
    background: #383838;
    color: #7c7c7c;
    font-size: 12.5px;
}

/* details */
.details {
    width: 313px;
    display: flex;
    flex-direction: column;
}
.dt-details {
    gap: 6px;
}
.details-body {
    flex: 1;
    background: #242424;
}
.details-search {
    height: 38px;
    display: flex;
    align-items: center;
    padding: 0 0 1px 8px;
}
.search-det {
    width: 248px;
    gap: 8px;
}
.det-table {
    margin-left: 13px;
}
.det-gear {
    margin-left: 8px;
}
.det-sec {
    height: 26px;
    display: flex;
    align-items: center;
    padding: 0 0 1px 5px;
    gap: 3px;
    background: #2f2f2f;
    font-weight: 700;
    font-size: 11px;
    color: #b8b8b8;
}
.det-sec .sec-arrow {
    margin-right: 4px;
}
.det-row {
    height: 27px;
    display: flex;
    border-bottom: 1px solid #1a1a1a;
    font-size: 11.5px;
}
.det-row + .det-sec {
    margin-top: 1px;
}
.det-name {
    width: 119px;
    display: flex;
    align-items: center;
    padding-left: 22px;
    border-right: 1px solid #1a1a1a;
    white-space: nowrap;
    position: relative;
}
.det-arrow {
    position: absolute;
    left: 5px;
    width: 10px;
    height: 13px;
    color: #777;
}
.det-val {
    width: 156px;
    display: flex;
    align-items: center;
    padding-left: 12px;
    border-right: 1px solid #1a1a1a;
}
.det-reset {
    flex: 1;
    display: flex;
    align-items: center;
    padding-left: 3px;
}
.det-reset svg {
    width: 14px;
    height: 12px;
    margin-left: 1px;
}
.text-box {
    height: 19px;
    display: flex;
    align-items: center;
    width: 139px;
    padding-left: 8px;
    border-radius: 4px;
    border: 1px solid #2a2a2a;
    background: #141414;
    color: #c8c8c8;
    white-space: nowrap;
}
.box-font {
    width: 124px;
}
.box-combo {
    width: 124px;
    height: 21px;
    padding: 0 12px 0 7px;
    justify-content: space-between;
}
.swatch {
    width: 119px;
    height: 20px;
    border-radius: 3px;
    background: #fff;
}
.check {
    width: 17px;
    height: 18px;
    border-radius: 3px;
    background: #141414;
    border: 1px solid #2a2a2a;
}
.check-dim {
    background: #262626;
}
.row-dim .det-name {
    color: #6a6a6a;
}

/* status bar */
.statusbar {
    height: 32px;
    display: flex;
    gap: 2px;
    background: #111;
}
.st-btn {
    display: flex;
    align-items: center;
    background: #242424;
    white-space: nowrap;
    gap: 4px;
}
.st-drawer {
    width: 131px;
    padding-left: 11px;
}
.st-log {
    width: 102px;
    padding-left: 9px;
    font-size: 12.5px;
}
.st-cmd {
    width: 366px;
    padding-left: 14px;
}
.console {
    width: 267px;
    height: 21px;
    margin-left: 9px;
    padding-left: 8px;
    border: 1px solid #2a2a2a;
    border-radius: 3px;
    background: #0f0f0f;
    color: #555;
    font-family: "Liberation Mono", monospace;
    font-size: 12.5px;
    line-height: 18px;
    letter-spacing: 0.3px;
}
.st-fill {
    flex: 1;
    background: #242424;
}
.st-source {
    position: relative;
    width: 133px;
    padding-left: 12px;
    gap: 5px;
    margin-right: 3px;
}
.grip {
    position: absolute;
    right: 2px;
    bottom: 4px;
    width: 6px;
    height: 6px;
}
```
